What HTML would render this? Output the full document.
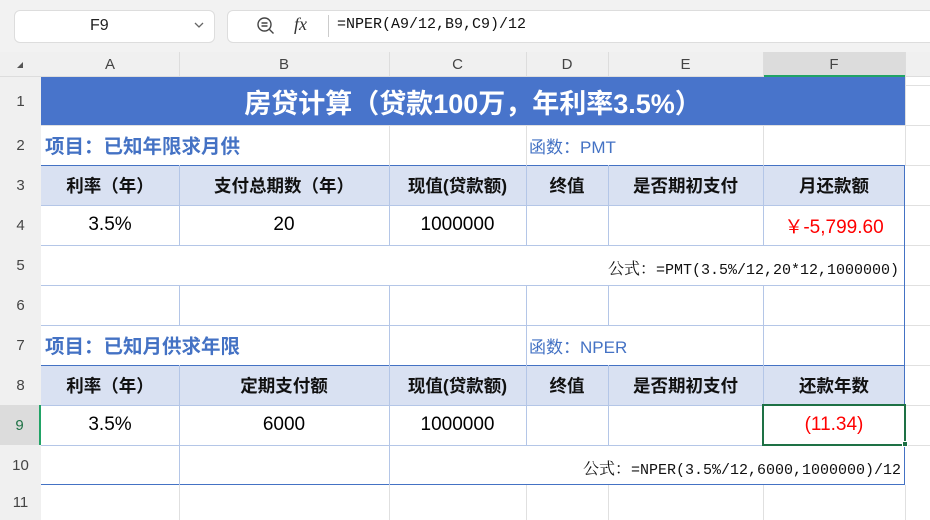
<!DOCTYPE html><html><head><meta charset="utf-8"><style>
*{margin:0;padding:0;box-sizing:border-box}
body{width:930px;height:520px;overflow:hidden;background:#fff;font-family:"Liberation Sans","Noto Sans CJK SC",sans-serif;position:relative}
.a{position:absolute}
.c{position:absolute;display:flex;align-items:center;justify-content:center;font-size:19px;color:#000}
.h{font-size:17.5px;font-weight:bold;color:#111}
.vl{position:absolute;width:1px}
.hl{position:absolute;height:1px}
.rh{position:absolute;left:0;width:41px;display:flex;align-items:center;justify-content:center;font-size:15px;color:#444;background:#f0f0f0}
.ch{position:absolute;top:52px;height:25px;display:flex;align-items:center;justify-content:center;font-size:15px;color:#444}
.mono{font-family:"Liberation Mono","Noto Serif CJK SC",monospace;font-size:15px;white-space:nowrap}
.mono span{font-family:"Noto Serif CJK SC",serif;font-size:16px}
</style></head><body>
<div class="a" style="left:0;top:0;width:930px;height:52px;background:#f2f2f2"></div>
<div class="a" style="left:14px;top:10px;width:201px;height:33px;background:#fff;border:1px solid #ddd;border-radius:6px"></div>
<div class="a" style="left:90px;top:17px;font-size:16px;color:#222">F9</div>
<svg class="a" style="left:193px;top:20px" width="12" height="10"><path d="M2 3l4 4 4-4" stroke="#666" stroke-width="1.3" fill="none"/></svg>
<div class="a" style="left:227px;top:10px;width:710px;height:33px;background:#fff;border:1px solid #ddd;border-radius:6px"></div>
<svg class="a" style="left:256px;top:16px" width="20" height="20"><circle cx="8.5" cy="8.5" r="6.5" stroke="#444" stroke-width="1.4" fill="none"/><path d="M5.5 7h6M5.5 10h6M13.5 13.5l4 4" stroke="#444" stroke-width="1.4"/></svg>
<div class="a" style="left:294px;top:14px;font-size:18px;font-style:italic;font-family:'Liberation Serif',serif;color:#333">fx</div>
<div class="a" style="left:328px;top:15px;width:1px;height:22px;background:#ccc"></div>
<div class="a mono" style="left:337px;top:16px;color:#111">=NPER(A9/12,B9,C9)/12</div>

<div class="a" style="left:0;top:52px;width:930px;height:25px;background:#f0f0f0;border-bottom:1px solid #ddd"></div>
<div class="a" style="left:0;top:77px;width:41px;height:443px;background:#f0f0f0;border-right:1px solid #ddd"></div>
<div class="a" style="left:763px;top:52px;width:142px;height:25px;background:#dcdcdc;border-bottom:2px solid #21a366"></div>
<svg class="a" style="left:15px;top:60px" width="10" height="10"><path d="M8 2L8 8L2 8Z" fill="#555"/></svg>
<div class="ch" style="left:41px;width:138px">A</div><div class="ch" style="left:179px;width:210px">B</div><div class="ch" style="left:389px;width:137px">C</div><div class="ch" style="left:526px;width:82px">D</div><div class="ch" style="left:608px;width:155px">E</div><div class="ch" style="left:763px;width:142px">F</div>
<div class="vl" style="left:179px;top:52px;height:25px;background:#ddd"></div><div class="vl" style="left:389px;top:52px;height:25px;background:#ddd"></div><div class="vl" style="left:526px;top:52px;height:25px;background:#ddd"></div><div class="vl" style="left:608px;top:52px;height:25px;background:#ddd"></div><div class="vl" style="left:763px;top:52px;height:25px;background:#ddd"></div><div class="vl" style="left:905px;top:52px;height:25px;background:#ddd"></div>

<div class="rh" style="top:77px;height:48px">1</div>
<div class="rh" style="top:125px;height:40px">2</div><div class="rh" style="top:165px;height:40px">3</div><div class="rh" style="top:205px;height:40px">4</div><div class="rh" style="top:245px;height:40px">5</div><div class="rh" style="top:285px;height:40px">6</div><div class="rh" style="top:325px;height:40px">7</div><div class="rh" style="top:365px;height:40px">8</div><div class="rh" style="top:405px;height:40px;background:#dcdcdc;color:#1e7145;border-right:2px solid #21a366">9</div><div class="rh" style="top:445px;height:40px">10</div><div class="rh" style="top:485px;height:35px">11</div>

<div class="a" style="left:41px;top:77px;width:864px;height:48px;background:#4874cb"></div>
<div class="a" style="left:41px;top:165px;width:864px;height:40px;background:#d9e1f2"></div>
<div class="a" style="left:41px;top:365px;width:864px;height:40px;background:#d9e1f2"></div>

<div class="hl" style="left:41px;top:165px;width:864px;background:#4472c4"></div>
<div class="hl" style="left:41px;top:205px;width:864px;background:#b4c6e7"></div>
<div class="hl" style="left:41px;top:245px;width:864px;background:#b4c6e7"></div>
<div class="hl" style="left:41px;top:285px;width:864px;background:#b4c6e7"></div>
<div class="hl" style="left:41px;top:325px;width:864px;background:#b4c6e7"></div>
<div class="hl" style="left:41px;top:365px;width:864px;background:#4472c4"></div>
<div class="hl" style="left:41px;top:405px;width:864px;background:#b4c6e7"></div>
<div class="hl" style="left:41px;top:445px;width:864px;background:#b4c6e7"></div>
<div class="hl" style="left:41px;top:484px;width:864px;background:#4472c4"></div>
<div class="hl" style="left:41px;top:125px;width:889px;background:#e0e0e0"></div>
<div class="hl" style="left:905px;top:165px;width:25px;background:#e0e0e0"></div>
<div class="hl" style="left:905px;top:205px;width:25px;background:#e0e0e0"></div>
<div class="hl" style="left:905px;top:245px;width:25px;background:#e0e0e0"></div>
<div class="hl" style="left:905px;top:285px;width:25px;background:#e0e0e0"></div>
<div class="hl" style="left:905px;top:325px;width:25px;background:#e0e0e0"></div>
<div class="hl" style="left:905px;top:365px;width:25px;background:#e0e0e0"></div>
<div class="hl" style="left:905px;top:405px;width:25px;background:#e0e0e0"></div>
<div class="hl" style="left:905px;top:445px;width:25px;background:#e0e0e0"></div>
<div class="hl" style="left:905px;top:85px;width:25px;background:#e0e0e0"></div>
<div class="vl" style="left:389px;top:125px;height:40px;background:#e0e0e0"></div><div class="vl" style="left:526px;top:125px;height:40px;background:#e0e0e0"></div><div class="vl" style="left:763px;top:125px;height:40px;background:#e0e0e0"></div><div class="vl" style="left:905px;top:77px;height:88px;background:#e0e0e0"></div>
<div class="vl" style="left:179px;top:165px;height:80px;background:#b4c6e7"></div><div class="vl" style="left:389px;top:165px;height:80px;background:#b4c6e7"></div><div class="vl" style="left:526px;top:165px;height:80px;background:#b4c6e7"></div><div class="vl" style="left:608px;top:165px;height:80px;background:#b4c6e7"></div><div class="vl" style="left:763px;top:165px;height:80px;background:#b4c6e7"></div>
<div class="vl" style="left:179px;top:245px;height:80px;background:#b4c6e7"></div><div class="vl" style="left:389px;top:245px;height:80px;background:#b4c6e7"></div><div class="vl" style="left:608px;top:285px;height:40px;background:#b4c6e7"></div><div class="vl" style="left:763px;top:285px;height:40px;background:#b4c6e7"></div><div class="vl" style="left:526px;top:285px;height:40px;background:#b4c6e7"></div>
<div class="vl" style="left:389px;top:325px;height:40px;background:#b4c6e7"></div><div class="vl" style="left:526px;top:325px;height:40px;background:#b4c6e7"></div><div class="vl" style="left:763px;top:325px;height:40px;background:#b4c6e7"></div>
<div class="vl" style="left:179px;top:365px;height:80px;background:#b4c6e7"></div><div class="vl" style="left:389px;top:365px;height:80px;background:#b4c6e7"></div><div class="vl" style="left:526px;top:365px;height:80px;background:#b4c6e7"></div><div class="vl" style="left:608px;top:365px;height:80px;background:#b4c6e7"></div><div class="vl" style="left:763px;top:365px;height:80px;background:#b4c6e7"></div>
<div class="vl" style="left:179px;top:445px;height:40px;background:#b4c6e7"></div><div class="vl" style="left:389px;top:445px;height:40px;background:#b4c6e7"></div>
<div class="vl" style="left:179px;top:485px;height:35px;background:#e0e0e0"></div><div class="vl" style="left:389px;top:485px;height:35px;background:#e0e0e0"></div><div class="vl" style="left:526px;top:485px;height:35px;background:#e0e0e0"></div><div class="vl" style="left:608px;top:485px;height:35px;background:#e0e0e0"></div><div class="vl" style="left:763px;top:485px;height:35px;background:#e0e0e0"></div><div class="vl" style="left:905px;top:485px;height:35px;background:#e0e0e0"></div>
<div class="vl" style="left:904px;top:165px;height:320px;background:#4472c4"></div>

<div class="c" style="left:41px;top:77px;width:864px;height:48px;color:#fff;font-size:27px;font-weight:bold">房贷计算（贷款100万，年利率3.5%）</div>
<div class="a" style="left:45px;top:130px;font-size:19.5px;font-weight:bold;color:#4472c4">项目：已知年限求月供</div>
<div class="a" style="left:529px;top:133px;font-size:17px;color:#4472c4">函数：PMT</div>
<div class="c h" style="left:41px;top:165px;width:138px;height:40px">利率（年）</div>
<div class="c h" style="left:179px;top:165px;width:210px;height:40px">支付总期数（年）</div>
<div class="c h" style="left:389px;top:165px;width:137px;height:40px">现值(贷款额)</div>
<div class="c h" style="left:526px;top:165px;width:82px;height:40px">终值</div>
<div class="c h" style="left:608px;top:165px;width:155px;height:40px">是否期初支付</div>
<div class="c h" style="left:763px;top:165px;width:142px;height:40px">月还款额</div>
<div class="c" style="left:41px;top:205px;width:138px;height:40px">3.5%</div>
<div class="c" style="left:179px;top:205px;width:210px;height:40px">20</div>
<div class="c" style="left:389px;top:205px;width:137px;height:40px">1000000</div>
<div class="c" style="left:763px;top:205px;width:142px;height:40px;color:#f00">￥-5,799.60</div>
<div class="a" style="left:41px;top:246px;width:863px;height:39px;background:#fff"></div>
<div class="a mono" style="right:31px;top:256px;color:#111"><span>公式：</span>=PMT(3.5%/12,20*12,1000000)</div>
<div class="a" style="left:45px;top:330px;font-size:19.5px;font-weight:bold;color:#4472c4">项目：已知月供求年限</div>
<div class="a" style="left:529px;top:333px;font-size:17px;color:#4472c4">函数：NPER</div>
<div class="c h" style="left:41px;top:365px;width:138px;height:40px">利率（年）</div>
<div class="c h" style="left:179px;top:365px;width:210px;height:40px">定期支付额</div>
<div class="c h" style="left:389px;top:365px;width:137px;height:40px">现值(贷款额)</div>
<div class="c h" style="left:526px;top:365px;width:82px;height:40px">终值</div>
<div class="c h" style="left:608px;top:365px;width:155px;height:40px">是否期初支付</div>
<div class="c h" style="left:763px;top:365px;width:142px;height:40px">还款年数</div>
<div class="c" style="left:41px;top:405px;width:138px;height:40px">3.5%</div>
<div class="c" style="left:179px;top:405px;width:210px;height:40px">6000</div>
<div class="c" style="left:389px;top:405px;width:137px;height:40px">1000000</div>
<div class="a" style="left:762px;top:404px;width:144px;height:42px;border:2px solid #1e7145"></div>
<div class="a" style="left:902px;top:441px;width:6px;height:6px;background:#1e7145;border:1px solid #fff"></div>
<div class="c" style="left:763px;top:405px;width:142px;height:40px;color:#f00">(11.34)</div>
<div class="a" style="left:390px;top:446px;width:514px;height:38px;background:#fff"></div>
<div class="a mono" style="right:29px;top:456px;color:#111"><span>公式：</span>=NPER(3.5%/12,6000,1000000)/12</div>
</body></html>
